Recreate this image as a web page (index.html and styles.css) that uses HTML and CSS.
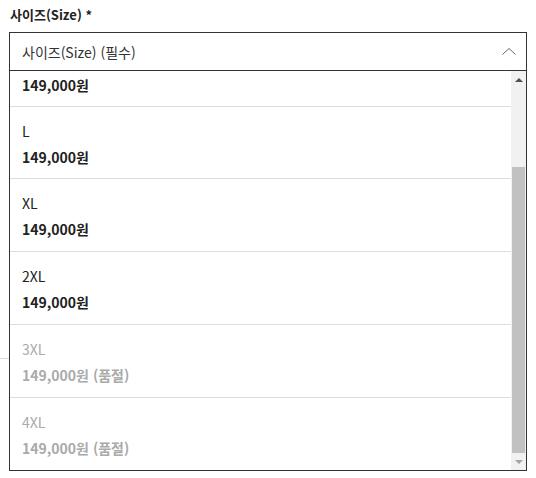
FILE: index.html
```html
<!DOCTYPE html>
<html lang="ko">
<head>
    <meta charset="UTF-8">
    <meta name="viewport" content="width=device-width, initial-scale=1.0">
    <title>사이즈 선택</title>
    <link rel="stylesheet" href="styles.css">
</head>
<body>
    <div class="field">
        <div class="field-label">사이즈(Size) *</div>

        <div class="select">
            <div class="select-box">
                <span>사이즈(Size) (필수)</span>
                <svg class="chevron" width="14" height="8" viewBox="0 0 14 8">
                    <polyline points="0.5,7.5 7,1.5 13.5,7.5" fill="none" stroke="#666" stroke-width="1"/>
                </svg>
            </div>

            <div class="select-list">
                <div class="options">
                    <div class="options-inner">
                        <div class="option">
                            <div class="option-size">S</div>
                            <div class="option-price">149,000원</div>
                        </div>
                        <div class="option">
                            <div class="option-size">M</div>
                            <div class="option-price">149,000원</div>
                        </div>
                        <div class="option">
                            <div class="option-size">L</div>
                            <div class="option-price">149,000원</div>
                        </div>
                        <div class="option">
                            <div class="option-size">XL</div>
                            <div class="option-price">149,000원</div>
                        </div>
                        <div class="option">
                            <div class="option-size">2XL</div>
                            <div class="option-price">149,000원</div>
                        </div>
                        <div class="option sold-out">
                            <div class="option-size">3XL</div>
                            <div class="option-price">149,000원 (품절)</div>
                        </div>
                        <div class="option sold-out">
                            <div class="option-size">4XL</div>
                            <div class="option-price">149,000원 (품절)</div>
                        </div>
                    </div>
                </div>

                <div class="scrollbar">
                    <div class="scroll-btn"><span class="arrow-up"></span></div>
                    <div class="scroll-track">
                        <div class="scroll-thumb"></div>
                    </div>
                    <div class="scroll-btn"><span class="arrow-down"></span></div>
                </div>
            </div>
        </div>
    </div>

    <div class="page">
        <div class="divider"></div>
    </div>
</body>
</html>
```

FILE: styles.css
```css
html,
body {
    height: 100%;
}

body {
    margin: 0;
    padding: 0;
    background-color: #fff;
    font-family: "Noto Sans CJK KR", "Noto Sans", sans-serif;
    color: #222;
}

.field {
    padding: 5px 0 0 9px;
}

.field-label {
    font-size: 13px;
    font-weight: bold;
    line-height: 20px;
    margin-bottom: 7px;
    padding-left: 1px;
}

.select {
    position: relative;
    width: 518px;
}

.select-box {
    box-sizing: border-box;
    height: 39px;
    border: 1px solid #333;
    display: flex;
    justify-content: space-between;
    align-items: center;
    padding: 0 10px 0 12px;
    font-size: 14px;
    color: #333;
}

.chevron {
    display: block;
    margin-top: -1px;
}

.select-list {
    position: absolute;
    top: 100%;
    left: 0;
    right: 0;
    height: 399px;
    border: 1px solid #333;
    border-top: none;
    background-color: #fff;
    display: flex;
    z-index: 2;
}

.options {
    flex: 1;
    overflow: hidden;
}

.options-inner {
    margin-top: -108px;
}

.option {
    height: 72px;
    box-sizing: border-box;
    padding: 11px 12px 0;
    border-bottom: 1px solid #ddd;
    font-size: 14px;
    line-height: 26px;
    color: #222;
}

.option:nth-child(n+4) {
    height: 73px;
}

.option-price {
    font-weight: bold;
}

.sold-out {
    color: #aaa;
}

.scrollbar {
    width: 15px;
    background-color: #f1f1f1;
    display: flex;
    flex-direction: column;
}

.scroll-btn {
    height: 17px;
    display: flex;
    justify-content: center;
    align-items: center;
}

.arrow-up {
    width: 0;
    height: 0;
    border-left: 4px solid transparent;
    border-right: 4px solid transparent;
    border-bottom: 4px solid #505050;
}

.arrow-down {
    width: 0;
    height: 0;
    border-left: 4px solid transparent;
    border-right: 4px solid transparent;
    border-top: 4px solid #a3a3a3;
}

.scroll-track {
    flex: 1;
    display: flex;
    flex-direction: column;
    justify-content: flex-end;
    padding: 0 1px;
}

.scroll-thumb {
    height: 286px;
    background-color: #c1c1c1;
}

.page {
    padding-top: 287px;
}

.divider {
    width: 200px;
    height: 1px;
    background-color: #ddd;
}
```
